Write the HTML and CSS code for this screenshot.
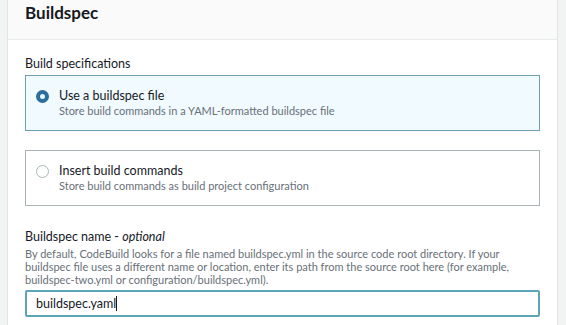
FILE: index.html
```html
<!DOCTYPE html>
<html>
<head>
<meta charset="utf-8">
<link rel="stylesheet" href="styles.css">
</head>
<body>
<div class="card">
  <div class="card-header"><h2 class="title">Buildspec</h2></div>
  <div class="card-body">
    <div class="field-label">Build specifications</div>
    <div class="tiles">
      <div class="tile selected">
        <span class="radio checked"></span>
        <div class="tile-text">
          <div class="tile-title">Use a buildspec file</div>
          <div class="tile-desc">Store build commands in a YAML-formatted buildspec file</div>
        </div>
      </div>
      <div class="tile">
        <span class="radio"></span>
        <div class="tile-text">
          <div class="tile-title">Insert build commands</div>
          <div class="tile-desc">Store build commands as build project configuration</div>
        </div>
      </div>
    </div>
    <div class="field">
      <div class="field-label">Buildspec name - <i>optional</i></div>
      <div class="field-desc">By default, CodeBuild looks for a file named buildspec.yml in the source code root directory. If your<br>buildspec file uses a different name or location, enter its path from the source root here (for example,<br>buildspec-two.yml or configuration/buildspec.yml).</div>
      <div class="input"><span>buildspec.yaml</span><span class="caret"></span></div>
    </div>
  </div>
</div>
</body>
</html>
```
FILE: styles.css
```css
* { box-sizing: border-box; }
html, body { margin: 0; padding: 0; }
body {
  background: #f2f3f3;
  font-family: Lato, "Open Sans", sans-serif;
  color: #16191f;
  padding: 0 8px 0 7px;
  height: 325px;
  overflow: hidden;
}
.card {
  background: #fff;
  border-left: 1px solid #e1e4e4;
  border-right: 1px solid #e1e4e4;
  height: 340px;
}
.card-header {
  background: #fafafa;
  height: 40px;
  border-bottom: 1px solid #e9ecec;
  padding: 0 17px;
}
.title {
  margin: 0;
  font-size: 17px;
  font-weight: 700;
  line-height: 26px;
}
.card-body {
  padding: 14px 17px 0 17px;
}
.field-label {
  font-size: 12.5px;
  line-height: 20px;
}
.tiles {
  display: flex;
  flex-direction: column;
  gap: 19px;
  margin-top: 1px;
}
.tile {
  height: 56px;
  border: 1px solid #a9b2b4;
  display: flex;
  align-items: flex-start;
  padding: 12px 10px 0 10px;
  gap: 10px;
}
.tile.selected {
  background: #f1faff;
  border-color: #6f9fb3;
}
.radio {
  width: 13px;
  height: 13px;
  border-radius: 50%;
  border: 1px solid #aab7b8;
  background: #fff;
  margin-top: 2px;
  flex: none;
}
.radio.checked {
  border: 4px solid #2c6e9d;
  background: #e8f8ff;
}
.tile-title {
  font-size: 12.5px;
  line-height: 16px;
}
.tile-desc {
  font-size: 11px;
  line-height: 14px;
  color: #687078;
}
.field {
  margin-top: 21px;
}
.field-desc {
  font-size: 11px;
  line-height: 13px;
  color: #687078;
}
.input {
  margin-top: 4px;
  height: 27px;
  border: 2px solid #5ea4b7;
  border-radius: 2px;
  padding: 0 9px;
  display: flex;
  align-items: center;
  font-size: 12.5px;
}
.caret {
  display: inline-block;
  width: 1px;
  height: 15px;
  background: #16191f;
}
```
